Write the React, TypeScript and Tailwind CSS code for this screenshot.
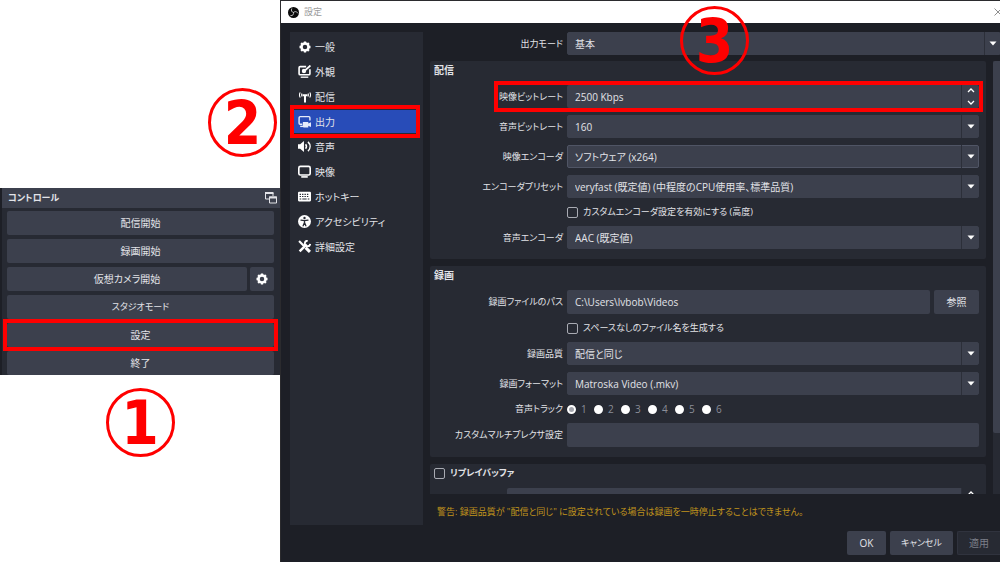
import { useId, useState } from "react"
import type { ReactNode } from "react"

function ObsLogo() {
  return (
    <svg viewBox="0 0 24 24" className="size-[11px]" aria-hidden="true">
      <circle cx="12" cy="12" r="12" fill="#0b0b0b" />
      <g fill="none" stroke="#c8c8c8" strokeWidth="2" strokeLinecap="round">
        <path d="M12 12C8 11 6 8 8 4" />
        <path d="M12 12c3-3 7-3 9 1" />
        <path d="M12 12c1 4-1 7-6 7" />
      </g>
    </svg>
  )
}

function GearIcon() {
  return (
    <svg viewBox="0 0 24 24" className="size-3" fill="none" stroke="#fff" aria-hidden="true">
      <circle cx="12" cy="12" r="7" strokeWidth="5" />
      <path
        d="M12 1v4M12 19v4M1 12h4M19 12h4M4.200 4.200l2.800 2.800M17 17l2.800 2.800M4.200 19.800 7 17M17 7l2.800-2.800"
        strokeWidth="4.600"
      />
    </svg>
  )
}

function AppearanceIcon() {
  return (
    <svg viewBox="0 0 24 24" className="size-[13px]" fill="none" stroke="#fff" strokeWidth="3" aria-hidden="true">
      <path d="M15 3H4a2 2 0 0 0-2 2v11a2 2 0 0 0 2 2h16a2 2 0 0 0 2-2V8" />
      <path d="M5 22.500h14" strokeWidth="2.500" />
      <path d="M23 1 13 10" strokeWidth="3.500" />
      <circle cx="11" cy="11" r="4" fill="#fff" stroke="none" />
    </svg>
  )
}

function AntennaIcon() {
  return (
    <svg viewBox="0 0 24 24" className="size-3" fill="none" stroke="#fff" strokeWidth="2.200" aria-hidden="true">
      <path d="M2.500 3C.5 6 .5 10 2.500 13M21.500 3c2 3 2 7 0 10M6 5c-1 2-1 4 0 6M18 5c1 2 1 4 0 6" />
      <path d="M7 8.500h10" strokeWidth="4" />
      <path d="M12 8v15" strokeWidth="4" />
    </svg>
  )
}

function OutputIcon() {
  return (
    <svg viewBox="0 0 24 24" className="size-[13px]" fill="none" stroke="#e6ebfa" strokeWidth="2.600" aria-hidden="true">
      <path d="M22 10V5a2 2 0 0 0-2-2H4a2 2 0 0 0-2 2v10a2 2 0 0 0 2 2h4" />
      <path d="M4 21h6" />
      <path d="M9 13h10v2.500l5-2V22l-5-2v3H11a2 2 0 0 1-2-2z" fill="#e6ebfa" stroke="none" />
    </svg>
  )
}

function SpeakerIcon() {
  return (
    <svg viewBox="0 0 24 24" className="size-[13px]" fill="none" stroke="#fff" strokeWidth="2.800" aria-hidden="true">
      <path d="M0 8h4l7-6v20l-7-6H0z" fill="#fff" stroke="none" />
      <path d="M14 8c2 2.500 2 5.500 0 8" />
      <path d="M18.500 3.500c5 5 5 12 0 17" />
    </svg>
  )
}

function DisplayIcon() {
  return (
    <svg viewBox="0 0 24 24" className="size-[13px]" fill="none" stroke="#fff" strokeWidth="3" aria-hidden="true">
      <rect x="1.500" y="2.500" width="21" height="16" rx="3" />
      <path d="M6 22h12" />
    </svg>
  )
}

function KeyboardIcon() {
  return (
    <svg viewBox="0 0 24 24" className="size-[13px]" aria-hidden="true">
      <rect x="0" y="3" width="24" height="18" rx="2" fill="#fff" />
      <g stroke="#272a33" strokeWidth="2">
        <path d="M3 8h18" strokeDasharray="2.500 2" />
        <path d="M3 12h18" strokeDasharray="2.500 2" />
        <path d="M3 16.500h3M8 16.500h8M18 16.500h3" />
      </g>
    </svg>
  )
}

function AccessibilityIcon() {
  return (
    <svg viewBox="0 0 24 24" className="size-[13px]" aria-hidden="true">
      <circle cx="12" cy="12" r="12" fill="#fff" />
      <circle cx="12" cy="5.500" r="2.200" fill="#272a33" />
      <path
        d="M5.500 9.500 12 10.500l6.500-1M12 10.500V15M12 14l-2.500 6M12 14l2.500 6"
        fill="none"
        stroke="#272a33"
        strokeWidth="2.400"
        strokeLinecap="round"
      />
    </svg>
  )
}

function ToolsIcon() {
  return (
    <svg viewBox="0 0 24 24" className="size-[13px]" fill="none" stroke="#fff" aria-hidden="true">
      <path d="M2 2l9 9" strokeWidth="4" />
      <path d="M14 14l8 8" strokeWidth="5.500" />
      <path d="M3 21 16 8" strokeWidth="4.500" />
      <path d="M18 1.500a5 5 0 1 0 4.500 5.500" strokeWidth="3.500" />
    </svg>
  )
}

function PopOutIcon() {
  return (
    <svg viewBox="0 0 12 12" className="size-3" fill="none" stroke="currentColor" aria-hidden="true">
      <path d="M8 4V1H.5v6H4" />
      <path d="M0 1h8.500" strokeWidth="2" />
      <path d="M4.500 5h7v6h-7z" />
      <path d="M4 5.500h8" strokeWidth="2" />
    </svg>
  )
}

const categories = [
  { name: "一般", icon: <GearIcon /> },
  { name: "外観", icon: <AppearanceIcon /> },
  { name: "配信", icon: <AntennaIcon /> },
  { name: "出力", icon: <OutputIcon /> },
  { name: "音声", icon: <SpeakerIcon /> },
  { name: "映像", icon: <DisplayIcon /> },
  { name: "ホットキー", icon: <KeyboardIcon /> },
  { name: "アクセシビリティ", icon: <AccessibilityIcon /> },
  { name: "詳細設定", icon: <ToolsIcon /> },
]

function StepMark({ step }: { step: number }) {
  return (
    <div className="flex size-[69px] items-center justify-center rounded-full border-3 border-[#ff0000] font-['DejaVu_Sans_Condensed','DejaVu_Sans',sans-serif] text-[60px] leading-none font-bold text-[#ff0000]">
      {step}
    </div>
  )
}

interface DockButtonProps {
  children: ReactNode
  label?: string
  className?: string
}

function DockButton({ children, label, className = "flex-1" }: DockButtonProps) {
  return (
    <button
      type="button"
      aria-label={label}
      className={`flex h-6 items-center justify-center rounded-xs bg-[#3c404d] ${className}`}
    >
      {children}
    </button>
  )
}

function ControlsDock() {
  return (
    <section className="border-l-2 border-[#1d1f26] bg-[#272a33]">
      <header className="flex h-5 items-center justify-between bg-[#3c404d] pr-[3px] pl-1.5">
        <h2 className="text-[9px] font-bold">コントロール</h2>
        <button type="button" aria-label="ドッキング解除">
          <PopOutIcon />
        </button>
      </header>
      <div className="flex flex-col gap-1 pt-[3px] pr-1.5 pl-[5px]">
        <div className="flex">
          <DockButton>配信開始</DockButton>
        </div>
        <div className="flex">
          <DockButton>録画開始</DockButton>
        </div>
        <div className="flex gap-[3px]">
          <DockButton>仮想カメラ開始</DockButton>
          <DockButton label="仮想カメラの設定" className="w-6">
            <GearIcon />
          </DockButton>
        </div>
        <div className="flex text-[9px]">
          <DockButton>スタジオモード</DockButton>
        </div>
        <div className="relative flex">
          <DockButton>設定</DockButton>
          <div className="pointer-events-none absolute -inset-1 border-4 border-[#ff0000]" />
        </div>
        <div className="flex">
          <DockButton>終了</DockButton>
        </div>
      </div>
    </section>
  )
}

function Row({ label, htmlFor, children }: { label?: string; htmlFor?: string; children: ReactNode }) {
  return (
    <div className="relative flex items-center gap-1">
      <label htmlFor={htmlFor} className="w-[133px] shrink-0 text-right text-[9px] whitespace-nowrap">
        {label}
      </label>
      {children}
    </div>
  )
}

interface SelectRowProps {
  label: string
  value: string
  outlined?: boolean
  flush?: boolean
}

function SelectRow({ label, value, outlined, flush }: SelectRowProps) {
  const id = useId()
  return (
    <Row label={label} htmlFor={id}>
      <div className="relative flex-1">
        <select
          id={id}
          className={`block h-[23px] w-full appearance-none border bg-[#3c404d] pr-5 pl-[7px] ${
            outlined ? "border-[#505565]" : "border-[#3c404d]"
          } ${flush ? "rounded-l-xs" : "rounded-xs"}`}
        >
          <option>{value}</option>
        </select>
        <span
          className={`pointer-events-none absolute inset-y-0 right-0 flex items-center justify-center border-l border-[#2c2f39] ${
            flush ? "w-4" : "w-[18px]"
          }`}
        >
          <svg viewBox="0 0 8 5" className="h-[5px] w-2" aria-hidden="true">
            <path d="M.5.5h7L4 4.500z" fill="#fff" />
          </svg>
        </span>
      </div>
    </Row>
  )
}

function Spinner() {
  return (
    <div className="flex w-[18px] flex-col border-l border-[#2c2f39]">
      <button type="button" aria-label="増やす" className="flex flex-1 items-center justify-center">
        <svg viewBox="0 0 8 5" className="h-[5px] w-2" fill="none" stroke="#fff" strokeWidth="1.300" aria-hidden="true">
          <path d="M1 4l3-3 3 3" />
        </svg>
      </button>
      <button type="button" aria-label="減らす" className="flex flex-1 items-center justify-center">
        <svg viewBox="0 0 8 5" className="h-[5px] w-2" fill="none" stroke="#fff" strokeWidth="1.300" aria-hidden="true">
          <path d="M1 1l3 3 3-3" />
        </svg>
      </button>
    </div>
  )
}

function CheckRow({ label }: { label: string }) {
  return (
    <Row>
      <label className="flex h-3.5 items-center gap-[5px] text-[9px]">
        <input type="checkbox" className="size-[11px] appearance-none rounded-xs border border-[#a9abb3] checked:bg-[#284cb8]" />
        {label}
      </label>
    </Row>
  )
}

function Group({ title, children }: { title: ReactNode; children: ReactNode }) {
  return (
    <section className="rounded-xs bg-[#272a33] pr-[7px] pb-2.5">
      <h3 className="flex h-6 items-start pt-0.5 pl-1 leading-[14px] font-bold">{title}</h3>
      <div className="flex flex-col gap-[7px]">{children}</div>
    </section>
  )
}

function StreamingGroup() {
  return (
    <Group title="配信">
      <Row label="映像ビットレート" htmlFor="video-bitrate">
        <div className="flex h-[23px] flex-1 rounded-xs bg-[#3c404d]">
          <input id="video-bitrate" defaultValue="2500 Kbps" className="min-w-0 flex-1 px-2" />
          <Spinner />
        </div>
        <div className="pointer-events-none absolute -inset-y-1 -right-1 left-16 border-4 border-[#ff0000]" />
      </Row>
      <SelectRow label="音声ビットレート" value="160" />
      <SelectRow label="映像エンコーダ" value="ソフトウェア (x264)" outlined />
      <SelectRow label="エンコーダプリセット" value="veryfast (既定値) (中程度のCPU使用率、標準品質)" />
      <CheckRow label="カスタムエンコーダ設定を有効にする (高度)" />
      <SelectRow label="音声エンコーダ" value="AAC (既定値)" />
    </Group>
  )
}

function RecordingGroup() {
  const [track, setTrack] = useState(1)

  return (
    <Group title="録画">
      <Row label="録画ファイルのパス" htmlFor="recording-path">
        <input
          id="recording-path"
          defaultValue="C:\Users\lvbob\Videos"
          className="h-6 min-w-0 flex-1 rounded-xs bg-[#3c404d] px-2"
        />
        <button type="button" className="h-6 w-[45px] rounded-xs bg-[#3c404d]">
          参照
        </button>
      </Row>
      <CheckRow label="スペースなしのファイル名を生成する" />
      <SelectRow label="録画品質" value="配信と同じ" />
      <SelectRow label="録画フォーマット" value="Matroska Video (.mkv)" />
      <Row label="音声トラック">
        <div className="flex gap-[7px]">
          {[1, 2, 3, 4, 5, 6].map((n) => (
            <label key={n} className="flex h-3.5 w-5 items-center gap-[5px] text-[#8b8e98]">
              <input
                type="radio"
                name="track"
                checked={track === n}
                onChange={() => setTrack(n)}
                className="size-[9px] shrink-0 appearance-none rounded-full border-2 border-white bg-white checked:bg-[#a4a6ae]"
              />
              {n}
            </label>
          ))}
        </div>
      </Row>
      <Row label="カスタムマルチプレクサ設定" htmlFor="muxer">
        <input id="muxer" className="h-6 min-w-0 flex-1 rounded-xs bg-[#3c404d] px-2" />
      </Row>
    </Group>
  )
}

function ReplayGroup() {
  return (
    <Group
      title={
        <label className="flex items-center gap-[5px] text-[9px]">
          <input type="checkbox" className="size-[11px] appearance-none rounded-xs border border-[#a9abb3] checked:bg-[#284cb8]" />
          リプレイバッファ
        </label>
      }
    >
      <div className="flex h-[23px] pl-[77px]">
        <input aria-label="最大リプレイ時間" className="min-w-0 flex-1 rounded-l-xs bg-[#3c404d] px-2" />
        <Spinner />
      </div>
    </Group>
  )
}

function SettingsDialog() {
  const [selected, setSelected] = useState("出力")

  return (
    <main className="relative flex min-w-0 flex-1 flex-col overflow-hidden border-t border-l border-[#2b2b2e] bg-[#1d1f26]">
      <header className="flex h-[22px] shrink-0 items-center gap-[5px] bg-white pl-[7px] text-[9px] text-[#9a9a9a]">
        <ObsLogo />
        <h1>設定</h1>
        <button type="button" aria-label="閉じる" className="-mr-0.5 ml-auto">
          <svg viewBox="0 0 8 8" className="size-2" stroke="#8f8f8f" aria-hidden="true">
            <path d="M.5.500l7 7M7.500.500l-7 7" />
          </svg>
        </button>
      </header>

      <div className="flex min-h-0 flex-1 gap-[7px] pt-[9px] pl-[9px]">
        <nav className="w-[133px] shrink-0 bg-[#272a33] pt-0.5 pr-[7px] pl-1">
          {categories.map(({ name, icon }) => (
            <div key={name} className="relative py-px">
              <button
                type="button"
                onClick={() => setSelected(name)}
                className={`flex h-[23px] w-full items-center gap-1 pl-1 whitespace-nowrap ${
                  selected === name ? "bg-[#284cb8]" : ""
                }`}
              >
                <span className="flex w-[13px] justify-center">{icon}</span>
                {name}
              </button>
              {name === "出力" && (
                <div className="pointer-events-none absolute -inset-1 border-4 border-[#ff0000]" />
              )}
            </div>
          ))}
        </nav>

        <div className="flex min-w-0 flex-1 flex-col">
          <div className="pb-1.5">
            <SelectRow label="出力モード" value="基本" flush />
          </div>
          <div className="flex min-h-0 flex-1 gap-[7px]">
            <div className="flex min-w-0 flex-1 flex-col gap-[7px] overflow-hidden">
              <StreamingGroup />
              <RecordingGroup />
              <ReplayGroup />
            </div>
            <div className="w-[7px] bg-[#272a33]">
              <div className="h-[86%] rounded-l-xs bg-[#3c404d]" />
            </div>
          </div>
          <p className="flex h-[31px] shrink-0 items-end pb-1.5 pl-[7px] text-[9px] leading-[14px] whitespace-nowrap text-[#c0941c]">
            警告: 録画品質が "配信と同じ" に設定されている場合は録画を一時停止することはできません。
          </p>
        </div>
      </div>

      <footer className="flex shrink-0 justify-end gap-1 pt-1.5 pb-[7px]">
        <button type="button" className="h-6 w-[39px] rounded-xs bg-[#3c404d]">
          OK
        </button>
        <button type="button" className="h-6 w-[63px] rounded-xs bg-[#3c404d] text-[9px]">
          キャンセル
        </button>
        <button
          type="button"
          disabled
          className="h-6 w-[43px] rounded-l-xs border border-r-0 border-[#30333e] bg-[#272a33] text-[#7c7f89]"
        >
          適用
        </button>
      </footer>

      <div className="pointer-events-none absolute top-[5px] left-[399px]">
        <StepMark step={3} />
      </div>
    </main>
  )
}

export default function App() {
  return (
    <div className="flex h-screen bg-white font-['Open_Sans','Noto_Sans_CJK_JP',sans-serif] text-[10px] leading-[14px] text-[#e2e3e8] [font-feature-settings:'palt']">
      <aside className="flex w-[280px] shrink-0 flex-col pt-[88px]">
        <div className="mr-[3px] mb-[31px] self-end">
          <StepMark step={2} />
        </div>
        <ControlsDock />
        <div className="mt-[13px] self-center">
          <StepMark step={1} />
        </div>
      </aside>
      <SettingsDialog />
    </div>
  )
}
